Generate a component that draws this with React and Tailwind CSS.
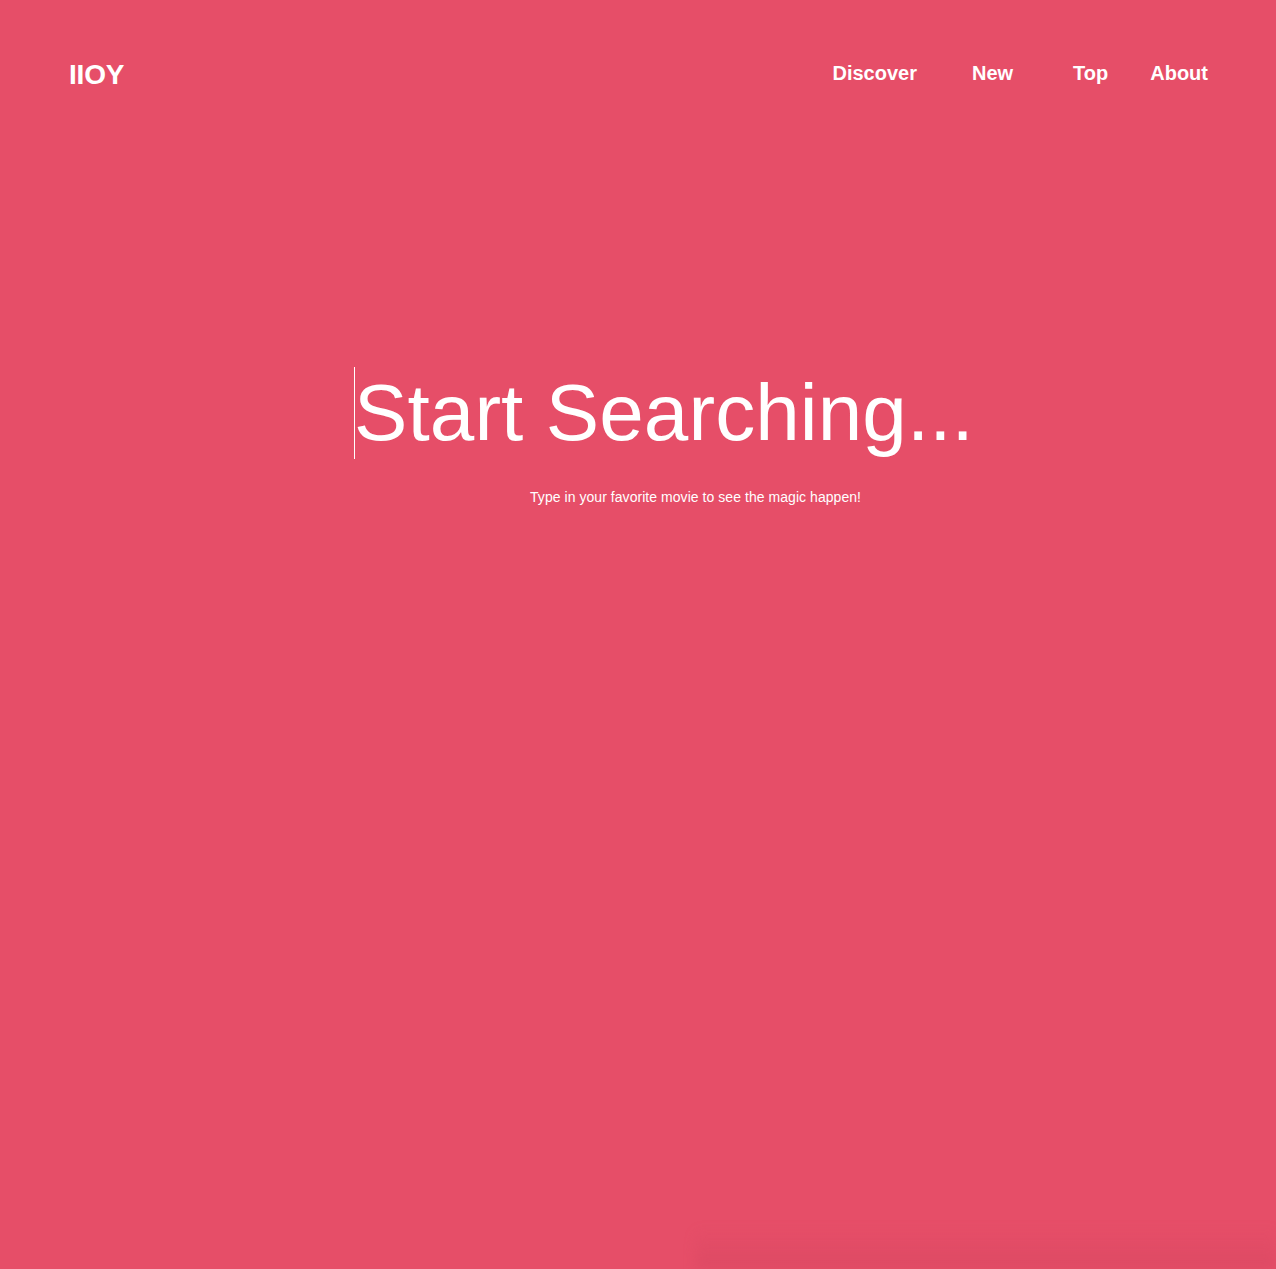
import React from "react";

const navLinks = [
  { label: "Discover", className: "" },
  { label: "New", className: "ml-[55px]" },
  { label: "Top", className: "ml-[60px]" },
  { label: "About", className: "ml-[42px]" },
];

const App = () => {
  return (
    <div
      className="relative min-h-[1269px] overflow-hidden bg-[#e64e68] text-white"
      style={{ fontFamily: '"Liberation Sans", Arial, sans-serif' }}
    >
      {/* Header */}
      <header className="flex items-start justify-between pl-[69px] pr-[68px] pt-[58px]">
        <a href="#" className="text-[28px] font-bold leading-[34px] tracking-[-0.2px]">
          IIOY
        </a>
        <nav className="flex pt-[3px]">
          {navLinks.map((link) => (
            <a
              key={link.label}
              href="#"
              className={`text-[20px] font-bold leading-[24px] ${link.className}`}
            >
              {link.label}
            </a>
          ))}
        </nav>
      </header>

      {/* Search */}
      <main className="flex flex-col pt-[275px]">
        <div className="flex items-start pl-[354px]">
          <div className="h-[92px] w-px bg-white" />
          <input
            type="text"
            placeholder="Start Searching..."
            className="-ml-px h-[92px] w-[700px] bg-transparent text-[80px] leading-[92px] tracking-[0.1px] text-white outline-none placeholder:text-white"
          />
        </div>
        <p className="mt-[30px] pl-[530px] text-[14px] leading-[17px] tracking-[0.05px]">
          Type in your favorite movie to see the magic happen!
        </p>
      </main>

      {/* faint shadow at the bottom edge */}
      <div className="pointer-events-none absolute bottom-0 right-0 h-[40px] w-[580px] bg-gradient-to-b from-transparent to-[#d94862]/70 blur-[6px]" />
    </div>
  );
};

export default App;
